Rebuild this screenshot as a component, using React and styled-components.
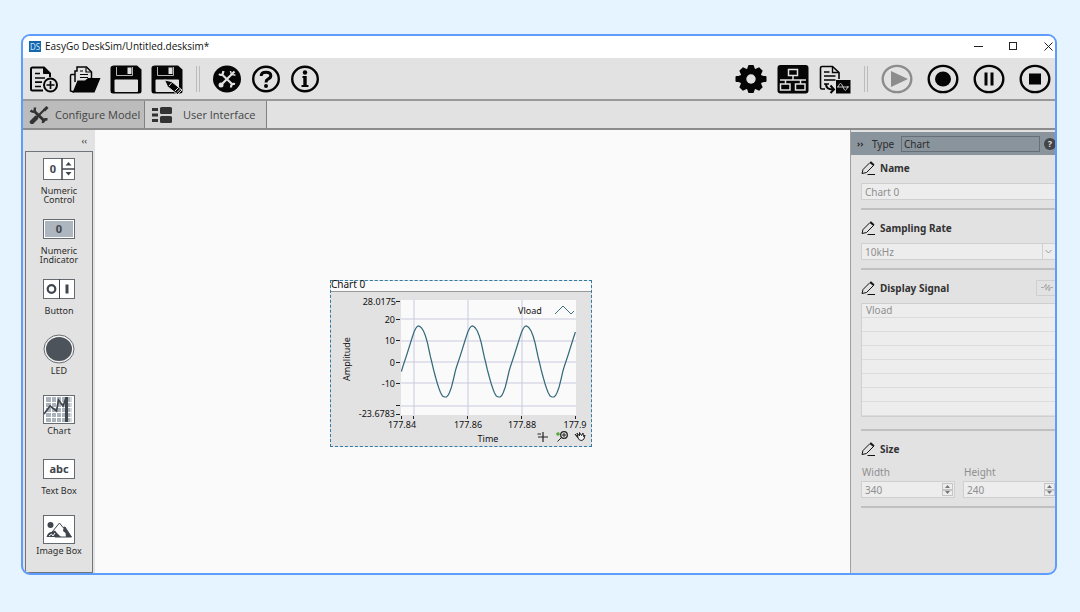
import { useState } from "react";
import styled, { createGlobalStyle } from "styled-components";

const ink = "#050505";
const paper = "#e2e2e2";

const PALETTE = [
  { label: "Numeric Control", icon: "control" },
  { label: "Numeric Indicator", icon: "indicator" },
  { label: "Button", icon: "button" },
  { label: "LED", icon: "led" },
  { label: "Chart", icon: "chart" },
  { label: "Text Box", icon: "text" },
  { label: "Image Box", icon: "image" },
];

const SIGNALS = ["Vload", "", "", "", "", "", "", ""];

const NewIcon = () => (
  <svg width="32" height="30" viewBox="0 0 32 30" fill="none" stroke={ink} strokeWidth="2">
    <path d="M15 26.500H4.500Q3 26.500 3 25V5Q3 3.500 4.500 3.500H16L22 9.500V13" />
    <path d="M15.500 4V9.500H21.500Z" fill={ink} strokeWidth="1" />
    <path d="M7 9.500H12M7 14H17M7 18.200H14M7 22.500H13" strokeWidth="1.700" />
    <circle cx="22.500" cy="21" r="6.500" />
    <path d="M18.500 21H26.500M22.500 17V25" strokeWidth="1.700" />
  </svg>
);

const OpenIcon = () => (
  <svg width="32" height="30" viewBox="0 0 32 30" fill="none" stroke={ink} strokeWidth="1.500">
    <path d="M6 10.500H2.500Q1.500 10.500 1.500 12V27L5 28" />
    <path d="M6 18V7H8V3H17.500L22.500 8V14" />
    <path d="M17 3.500V8H22M11 7H14M11 10.500H19M11 13.500H19" strokeWidth="1.200" />
    <path d="M3.500 28.500L8.500 16.500H16L19 14H31.500L25.500 28.500Z" fill={ink} stroke="none" />
  </svg>
);

const Floppy = () => (
  <>
    <path d="M4 1.500H27L31.500 5.500V27Q31.500 29.500 29 29.500H3Q0.500 29.500 0.500 27V4Q0.500 1.500 4 1.500Z" fill={ink} />
    <path d="M6.500 3V11.500H22.500V3" fill={ink} stroke={paper} strokeWidth="0.800" />
    <rect x="17.500" y="3.500" width="4" height="6.500" fill={paper} />
    <rect x="4.500" y="15.500" width="23.500" height="12.500" rx="1" fill={paper} />
  </>
);

const SaveIcon = () => (
  <svg width="32" height="30" viewBox="0 0 32 30">
    <Floppy />
  </svg>
);

const SaveAsIcon = () => (
  <svg width="32" height="30" viewBox="0 0 32 30">
    <Floppy />
    <path d="M13.500 16L20.500 17.500L31 26L26.500 30.500L16.500 22.500Z" fill={ink} stroke={paper} />
    <path d="M18 22L21 18.500M24 27L27.500 23.500M26 28.500L29.500 25" stroke={paper} />
  </svg>
);

const ToolsIcon = () => (
  <svg width="28" height="30" viewBox="0 0 28 30">
    <ellipse cx="14" cy="15" rx="14" ry="13.500" fill={ink} />
    <g stroke={paper} strokeWidth="2.200" fill="none">
      <path d="M9.500 11L19.500 20.500M21.500 7.500L8.500 20.500" />
      <path d="M6 10Q9.500 13 10.500 7M18 23.500Q18 19 22 20" />
      <path d="M17.500 7Q18 11.500 22.500 11" strokeWidth="1.500" />
    </g>
    <circle cx="8" cy="21" r="2.500" fill={paper} />
  </svg>
);

const HelpIcon = () => (
  <svg width="28" height="30" viewBox="0 0 28 30" fill="none" stroke={ink}>
    <ellipse cx="14" cy="15" rx="12.800" ry="12.300" strokeWidth="2.400" />
    <path d="M9.200 12Q9.200 8.300 14 8.300Q18.800 8.300 18.800 11.800Q18.800 13.800 16 15.200Q14 16.200 14 18.500" strokeWidth="3" />
    <circle cx="14" cy="22" r="2" fill={ink} stroke="none" />
  </svg>
);

const InfoIcon = () => (
  <svg width="28" height="30" viewBox="0 0 28 30" fill="none" stroke={ink}>
    <ellipse cx="14" cy="15" rx="12.800" ry="12.300" strokeWidth="2.400" />
    <circle cx="14" cy="8.500" r="2.200" fill={ink} stroke="none" />
    <path d="M11.500 13H14M10.500 22H17.500" strokeWidth="2" />
    <path d="M14 12V22" strokeWidth="3.400" />
  </svg>
);

const GearIcon = () => (
  <svg width="32" height="30" viewBox="0 0 32 30">
    <g fill={ink}>
      {[0, 45, 90, 135].map((a) => (
        <path key={a} d="M12 5L13.500 1H18.500L20 5V25L18.500 29H13.500L12 25Z" transform={`rotate(${a} 16 15)`} />
      ))}
      <rect x="0.500" y="12" width="31" height="6" rx="1" />
      <circle cx="16" cy="15" r="10.500" />
    </g>
    <circle cx="16" cy="15" r="4.700" fill={paper} />
  </svg>
);

const NetworkIcon = () => (
  <svg width="32" height="30" viewBox="0 0 32 30">
    <rect x="0.500" y="1" width="31" height="28.500" rx="3" fill={ink} />
    <g fill="none" stroke={paper} strokeWidth="1.500">
      <rect x="11.500" y="5.500" width="9" height="6" />
      <rect x="3.500" y="20" width="9.500" height="6" />
      <rect x="18.500" y="20" width="9.500" height="6" />
      <path d="M16 11.500V16M3 16H29M8.500 16V20M23.500 16V20" />
    </g>
  </svg>
);

const ReportIcon = () => (
  <svg width="32" height="30" viewBox="0 0 32 30" fill="none" stroke={ink}>
    <path d="M6 25H3Q1.500 25 1.500 23.500V4Q1.500 2.500 3 2.500H13.500L20 8.500V15" strokeWidth="1.600" />
    <path d="M13.500 3V8.500H19.500M5 8H10.500M5 12H16.500M5 16H16.500M5 20H10" strokeWidth="1.400" />
    <path d="M7 20Q7 25.500 14 25.500M11.500 21.500L15 25.500L11.500 29" strokeWidth="2" />
    <rect x="17" y="16" width="14.500" height="13.500" fill={ink} stroke="none" />
    <path d="M18 23H30M19 23Q21.500 16 24 23T29 22" stroke="#c8c8c8" />
  </svg>
);

const Ring = ({ color = ink, children }) => (
  <svg width="32" height="30" viewBox="0 0 32 30">
    <ellipse cx="16" cy="15" rx="14.300" ry="13.100" fill="none" stroke={color} strokeWidth="2.400" />
    <g fill={color}>{children}</g>
  </svg>
);

const ToolsTabIcon = () => (
  <svg width="20" height="18" viewBox="0 0 20 18" fill="none" stroke="#333">
    <path d="M5 5L16 15.500" strokeWidth="3" />
    <path d="M16 3L4 15" strokeWidth="2.200" />
    <path d="M1.500 4.500Q6 8 6 1.500M14 17Q13.500 12.500 18.500 13.500" strokeWidth="2.500" />
    <path d="M7 12L3 16" strokeWidth="4.500" strokeLinecap="round" />
    <path d="M15 4.500L18.500 1" strokeWidth="3" />
  </svg>
);

const ListTabIcon = () => (
  <svg width="22" height="16" viewBox="0 0 22 16" fill="#333">
    <path d="M1 1H7V4H1ZM1 6.500H7V9.500H1ZM1 12H7V15H1Z" />
    <rect x="9" y="0" width="12" height="7" rx="1.500" />
    <rect x="9" y="9" width="12" height="7" rx="1.500" />
  </svg>
);

const PencilIcon = () => (
  <svg width="14" height="14" viewBox="0 0 14 14" fill="none" stroke="#111">
    <path d="M1 12.500L2 8.500L9 1.500L12.500 4.500L5.500 11.500Z" />
    <path d="M9 1.500L10 0.800L13 3.500L12.500 4.500Z" fill="#111" />
    <path d="M6.500 13.500H14" />
  </svg>
);

const PaletteIcon = ({ kind }) => {
  const dark = "#40464d";
  const box = (y, h, fill = "#fff") => (
    <rect x="0.500" y={y + 0.5} width="31" height={h - 1} fill={fill} stroke="#666b70" />
  );
  return (
    <svg width="32" height="30" viewBox="0 0 32 30">
      {kind === "control" && (
        <>
          {box(4, 22)}
          <Glyph x="10" y="19">0</Glyph>
          <path d="M19 4V26M19 15H32" stroke={dark} strokeWidth="1.500" />
          <path d="M22.500 11.500L25.500 8L28.500 11.500ZM22.500 18L25.500 21.500L28.500 18Z" fill={dark} />
        </>
      )}
      {kind === "indicator" && (
        <>
          {box(5, 20)}
          <rect x="2" y="7" width="28" height="16" fill="#adb5be" />
          <Glyph x="16" y="19">0</Glyph>
        </>
      )}
      {kind === "button" && (
        <>
          {box(5, 20)}
          <path d="M16.500 5V25" stroke={dark} />
          <circle cx="8.500" cy="15" r="3.800" fill="none" stroke={dark} strokeWidth="2.200" />
          <path d="M24 10.500V19.500" stroke={dark} strokeWidth="3" />
        </>
      )}
      {kind === "led" && (
        <>
          <ellipse cx="16" cy="15" rx="15" ry="14" fill="#f4f4f4" stroke="#666b70" />
          <ellipse cx="16" cy="15" rx="13" ry="12" fill="#4c535a" />
        </>
      )}
      {kind === "chart" && (
        <>
          {box(1, 29)}
          <rect x="3" y="3" width="26" height="25" fill="#aab2bb" />
          <path d="M8.500 3V28M13.500 3V28M18.500 3V28M3 8.500H29M3 13.500H29M3 18.500H29M3 23.500H29M28 3V28" stroke="#fff" />
          <path d="M23.500 3V28" stroke={dark} strokeWidth="3" />
          <path d="M1 20L7 12L13.500 17L15.500 6L20 12L23 4" fill="none" stroke={dark} strokeWidth="1.700" />
        </>
      )}
      {kind === "text" && (
        <>
          {box(5, 20)}
          <Glyph x="16" y="19">abc</Glyph>
        </>
      )}
      {kind === "image" && (
        <>
          {box(1, 29)}
          <circle cx="7.500" cy="11" r="3" fill={dark} />
          <path d="M9 18L16.500 9L20 13.500L22 13L28.500 23H12Z" fill="#fff" stroke={dark} />
          <path d="M16.500 9L20.500 14L20 17L22.500 19L23 23H28.500L22 13L20 13.500Z" fill={dark} />
          <path d="M3.500 23Q5 18 8.500 18L12 16.500L14 19L18 23Z" fill={dark} />
          <path d="M6 22L8.500 20L10 22L12 19" fill="none" stroke="#fff" />
        </>
      )}
    </svg>
  );
};

// One cycle of the trace, starting at a crest
const PERIOD = 53.8;
const CYCLE = [
  [0, 26], [1.5, 26.5], [3, 28], [5, 31], [7, 36], [9, 43], [10.5, 50], [12, 57], [13.5, 63],
  [15, 69.5], [17, 77], [19, 84], [20.500, 88.500], [22, 92.500], [24, 96], [26, 97], [28, 97],
  [29.500, 95.500], [31, 92.500], [33, 87], [35, 79], [36.700, 71.500], [38, 67], [40, 61],
  [42, 55], [44.500, 47], [47, 39], [49.300, 32], [51, 28.500], [52.500, 26.500],
];

const trace = [-1, 0, 1, 2, 3]
  .flatMap((n) => CYCLE.map(([x, y]) => [x + 88.5 + n * PERIOD, y + 8]))
  .filter(([x]) => x >= 71 && x <= 246);

const ChartPlot = () => (
  <Plot width="260" height="154" viewBox="1 0 260 154" role="img" aria-label="Vload over time">
    <rect x="71" y="8" width="175" height="115" fill="#fafafa" />
    <path d="M84 8V123M138 8V123M192 8V123M71 27H246M71 49H246M71 70H246M71 91H246M71 114H246" stroke="#c9cade" />
    <path d="M66 9.500H70M66 27.500H70M66 48.500H70M66 70.500H70M66 91.500H70M66 113.500H70M66 122.500H70M71.500 124V127M83.500 124V127M137.500 124V127M191.500 124V127M245.500 124V127" stroke="#222" />
    <polyline points={trace.map((p) => p.join(",")).join(" ")} fill="none" stroke="#34697a" strokeWidth="1.200" />
    <g textAnchor="end">
      <text x="66" y="13">28.0175</text>
      <text x="65" y="31">20</text>
      <text x="65" y="52">10</text>
      <text x="65" y="74">0</text>
      <text x="65" y="95">-10</text>
      <text x="65" y="125">-23.6783</text>
    </g>
    <g textAnchor="middle">
      <text x="72" y="136">177.84</text>
      <text x="138" y="136">177.86</text>
      <text x="192" y="136">177.88</text>
      <text x="245" y="136">177.9</text>
      <text x="158" y="150">Time</text>
      <text transform="translate(20 67) rotate(-90)">Amplitude</text>
    </g>
    <text x="188" y="22">Vload</text>
    <path d="M225 22L233 14L241 22L244 19" fill="none" stroke="#3c6f80" />
    <path d="M208 145H218M213 140V150M207.500 142H211" stroke="#222" strokeWidth="1.200" />
    <circle cx="228" cy="142" r="1.800" fill="#56a83c" />
    <circle cx="234" cy="143" r="3.300" fill="none" stroke="#222" strokeWidth="1.300" />
    <path d="M232 143H236M234 141V145M231.500 145.500L227.500 149.500" stroke="#222" />
    <path d="M245 142L248 145.500L247 141L249.500 144L249.500 140.500L251.500 143.500L253 141L253.500 144.500L255 143L254 147Q252 149.500 249.500 148Z" fill="#f4f4f4" stroke="#222" />
  </Plot>
);

const Field = ({ id, label, value }) => {
  const [amount, setAmount] = useState(value);
  return (
    <SizeField>
      <label htmlFor={id}>{label}</label>
      <NumberBox>
        <input id={id} type="number" value={amount} onChange={(e) => setAmount(+e.target.value)} />
        <Spinner>
          <button aria-label={`Increase ${label}`} onClick={() => setAmount(amount + 1)}>
            <svg width="5" height="3" viewBox="0 0 5 3"><path d="M0 3L2.500 0L5 3Z" fill="#777" /></svg>
          </button>
          <button aria-label={`Decrease ${label}`} onClick={() => setAmount(amount - 1)}>
            <svg width="5" height="3" viewBox="0 0 5 3"><path d="M0 0L2.500 3L5 0Z" fill="#777" /></svg>
          </button>
        </Spinner>
      </NumberBox>
    </SizeField>
  );
};

export default function App() {
  const [name, setName] = useState("Chart 0");
  const [type, setType] = useState("Chart");
  return (
    <Page>
      <GlobalStyle />
      <Window>
        <TitleBar>
          <Logo>DS</Logo>
          <Title>EasyGo DeskSim/Untitled.desksim*</Title>
          <WindowButtons>
            <button aria-label="Minimize">
              <svg width="9" height="9" viewBox="0 0 9 9"><path d="M0 4.500H9" stroke="#222" /></svg>
            </button>
            <button aria-label="Maximize">
              <svg width="9" height="9" viewBox="0 0 9 9"><rect x="0.500" y="0.500" width="7" height="7" fill="none" stroke="#222" /></svg>
            </button>
            <button aria-label="Close">
              <svg width="9" height="9" viewBox="0 0 9 9"><path d="M0.500 0.500L8.500 8.500M8.500 0.500L0.500 8.500" stroke="#222" /></svg>
            </button>
          </WindowButtons>
        </TitleBar>

        <Toolbar>
          <Group $gap="9px">
            <IconButton aria-label="New"><NewIcon /></IconButton>
            <IconButton aria-label="Open"><OpenIcon /></IconButton>
            <IconButton aria-label="Save"><SaveIcon /></IconButton>
            <IconButton aria-label="Save as"><SaveAsIcon /></IconButton>
          </Group>
          <Separator />
          <Group $gap="11px">
            <IconButton aria-label="Tools"><ToolsIcon /></IconButton>
            <IconButton aria-label="Help"><HelpIcon /></IconButton>
            <IconButton aria-label="About"><InfoIcon /></IconButton>
          </Group>
          <Spacer />
          <Group $gap="10px">
            <IconButton aria-label="Settings"><GearIcon /></IconButton>
            <IconButton aria-label="Network"><NetworkIcon /></IconButton>
            <IconButton aria-label="Report"><ReportIcon /></IconButton>
          </Group>
          <Separator />
          <Group $gap="14px">
            <IconButton aria-label="Run"><Ring color="#8c8c8c"><path d="M10 7L27 15L10 23Z" /></Ring></IconButton>
            <IconButton aria-label="Record"><Ring><ellipse cx="16" cy="15" rx="8" ry="7.500" /></Ring></IconButton>
            <IconButton aria-label="Pause"><Ring><path d="M11.500 8.500H14.500V21.500H11.500ZM17.500 8.500H20.500V21.500H17.500Z" /></Ring></IconButton>
            <IconButton aria-label="Stop"><Ring><path d="M10 9.500H22V20.500H10Z" /></Ring></IconButton>
          </Group>
        </Toolbar>

        <Tabs>
          <Tab $bg="#bcbcbc"><ToolsTabIcon />Configure Model</Tab>
          <Tab $bg="#d2d2d2" $gap="10px"><ListTabIcon />User Interface</Tab>
        </Tabs>

        <Workspace>
          <Sidebar>
            <Collapse aria-label="Collapse palette">‹‹</Collapse>
            <Palette>
              {PALETTE.map((item) => (
                <PaletteItem key={item.label}>
                  <PaletteIcon kind={item.icon} />
                  <span>{item.label}</span>
                </PaletteItem>
              ))}
            </Palette>
          </Sidebar>

          <Canvas>
            <Widget>
              <WidgetTitle>{name}</WidgetTitle>
              <ChartPlot />
            </Widget>
          </Canvas>

          <Panel>
            <PanelHeader>
              <PanelToggle aria-label="Collapse panel">››</PanelToggle>
              <label htmlFor="type">Type</label>
              <TypeInput id="type" value={type} onChange={(e) => setType(e.target.value)} />
              <PanelHelp aria-label="Help">?</PanelHelp>
            </PanelHeader>
            <PanelBody>
              <Section>
                <SectionTitle><PencilIcon /><label htmlFor="name">Name</label></SectionTitle>
                <TextInput id="name" value={name} onChange={(e) => setName(e.target.value)} />
              </Section>
              <Section>
                <SectionTitle><PencilIcon /><label htmlFor="rate">Sampling Rate</label></SectionTitle>
                <SelectBox>
                  <select id="rate" defaultValue="10kHz">
                    <option>10kHz</option>
                    <option>1kHz</option>
                  </select>
                  <svg width="14" height="15" viewBox="0 0 14 15"><path d="M0.500 0V15" stroke="#cfcfcf" /><path d="M3.500 6L6.500 9L9.500 6" fill="none" stroke="#999" /></svg>
                </SelectBox>
              </Section>
              <Section $tail="12px">
                <SectionTitle>
                  <PencilIcon />
                  <h2>Display Signal</h2>
                  <SignalButton aria-label="Choose signals">
                    <svg width="12" height="10" viewBox="0 0 12 10"><path d="M0 5.500H3L5 2V8L8 3V9L9.500 5.500H12" fill="none" stroke="#aaa" /></svg>
                  </SignalButton>
                </SectionTitle>
                <SignalList>
                  {SIGNALS.map((signal, i) => (
                    <li key={i}>{signal}</li>
                  ))}
                </SignalList>
              </Section>
              <Section>
                <SectionTitle><PencilIcon /><h2>Size</h2></SectionTitle>
                <SizeRow>
                  <Field id="width" label="Width" value={340} />
                  <Field id="height" label="Height" value={240} />
                </SizeRow>
              </Section>
            </PanelBody>
          </Panel>
        </Workspace>
      </Window>
    </Page>
  );
}

const GlobalStyle = createGlobalStyle`
  * {
    box-sizing: border-box;
  }
  body {
    margin: 0;
    background: #e6f4ff;
  }
  body, button, input, select {
    font-family: "Noto Sans", "Open Sans", sans-serif;
    font-size: 9px;
    color: #2c2c2c;
  }
  button {
    padding: 0;
    border: none;
    background: none;
  }
  h2 {
    margin: 0;
    font-size: inherit;
  }
`;
const Page = styled.div`
  display: flex;
  min-height: 100vh;
  padding: 34px 23px 37px 21px;
`;
const Window = styled.main`
  flex: 1;
  min-width: 0;
  display: flex;
  flex-direction: column;
  border: 2px solid #5e9cff;
  border-radius: 9px;
  background: ${paper};
  overflow: hidden;
`;
const TitleBar = styled.header`
  display: flex;
  align-items: center;
  height: 22px;
  padding: 0 2px 2px 6px;
  background: #fff;
`;
const Logo = styled.span`
  width: 12px;
  height: 11px;
  margin-right: 4px;
  background: #1466ad;
  color: #cfe6fa;
  font-size: 8px;
  line-height: 11px;
  text-align: center;
`;
const Title = styled.span`
  font-family: "Open Sans", "Noto Sans", sans-serif;
  font-size: 10px;
  color: #111;
`;
const WindowButtons = styled.div`
  display: flex;
  gap: 26px;
  margin-left: auto;
  button {
    display: flex;
  }
`;
const Toolbar = styled.div`
  display: flex;
  align-items: center;
  height: 43px;
  padding: 0 4px 0 5px;
  border-bottom: 2px solid #999;
`;
const Group = styled.div`
  display: flex;
  gap: ${(props) => props.$gap};
`;
const IconButton = styled.button`
  display: flex;
`;
const Separator = styled.span`
  width: 4px;
  height: 26px;
  margin: 0 13px;
  border: solid #bbb;
  border-width: 0 1px;
`;
const Spacer = styled.span`
  flex: 1;
`;
const Tabs = styled.nav`
  display: flex;
  height: 29px;
  border-bottom: 2px solid #8c8c8c;
`;
const Tab = styled.button`
  display: flex;
  align-items: center;
  gap: ${(props) => props.$gap || "6px"};
  width: 122px;
  padding-left: 6px;
  border-right: 1px solid #808080;
  background: ${(props) => props.$bg};
  font-family: "Open Sans", "Noto Sans", sans-serif;
  font-size: 11px;
  color: #444;
  white-space: nowrap;
`;
const Workspace = styled.div`
  flex: 1;
  display: flex;
`;
const Sidebar = styled.aside`
  display: flex;
  flex-direction: column;
  width: 72px;
  padding-left: 2px;
`;
const Collapse = styled.button`
  height: 21px;
  padding-right: 8px;
  text-align: right;
`;
const Palette = styled.div`
  flex: 1;
  display: flex;
  flex-direction: column;
  gap: 8px;
  width: 68px;
  padding-top: 2px;
  border: 1px solid #70757c;
`;
const PaletteItem = styled.button`
  display: flex;
  flex-direction: column;
  align-items: center;
  gap: 2px;
  height: 52px;
  line-height: 9px;
  span {
    max-width: 50px;
  }
`;
const Glyph = styled.text`
  font-size: 11px;
  font-weight: 700;
  fill: #40464d;
  text-anchor: middle;
`;
const Canvas = styled.section`
  position: relative;
  flex: 1;
  background: #fafafa;
`;
const Widget = styled.div`
  position: absolute;
  left: 235px;
  top: 150px;
  border: 1px dashed #2f7ba3;
  background: ${paper};
`;
const WidgetTitle = styled.div`
  height: 11px;
  font-size: 10px;
  line-height: 7px;
  border-bottom: 1px solid #999;
  background: #fafafa;
  color: #111;
`;
const Plot = styled.svg`
  display: block;
  fill: #111;
`;
const Panel = styled.aside`
  width: 205px;
  border-left: 1px solid #a0a0a0;
  overflow: hidden;
  font-size: 10px;
  input, select {
    font-size: 10px;
  }
`;
const PanelHeader = styled.div`
  display: flex;
  align-items: center;
  height: 23px;
  margin-top: 2px;
  padding-left: 6px;
  background: #8a949c;
  label {
    width: 29px;
  }
`;
const PanelToggle = styled.button`
  width: 15px;
  text-align: left;
  font-weight: 700;
`;
const TypeInput = styled.input`
  flex: 1;
  min-width: 0;
  height: 16px;
  padding: 0 2px;
  border: 1px solid #666f77;
  background: none;
`;
const PanelHelp = styled.button`
  width: 12px;
  height: 12px;
  margin: 0 -1px 0 4px;
  border-radius: 50%;
  background: #444;
  color: #ddd;
  font-weight: 700;
  line-height: 12px;
`;
const PanelBody = styled.div`
  margin-right: -2px;
  padding-left: 10px;
`;
const Section = styled.section`
  padding-bottom: ${(props) => props.$tail || "8px"};
  border-bottom: 2px solid #c0c0c0;
  & + & {
    padding-top: 5px;
  }
`;
const SectionTitle = styled.div`
  display: flex;
  align-items: center;
  gap: 5px;
  height: 26px;
  margin-bottom: 2px;
  font-weight: 700;
  color: #333;
`;
const TextInput = styled.input`
  display: block;
  width: 100%;
  height: 17px;
  padding: 0 3px;
  border: 1px solid #cfcfcf;
  background: #ededed;
  color: #8f8f8f;
`;
const SelectBox = styled.div`
  display: flex;
  height: 17px;
  border: 1px solid #cfcfcf;
  background: #ededed;
  select {
    flex: 1;
    padding: 0 3px;
    border: none;
    appearance: none;
    background: none;
    color: #8f8f8f;
  }
`;
const SignalButton = styled.button`
  width: 21px;
  height: 16px;
  margin-left: auto;
  border: 1px solid #cfcfcf;
`;
const SignalList = styled.ul`
  margin: 0;
  padding: 0;
  border: 1px solid #cfcfcf;
  list-style: none;
  background: #ededed;
  color: #8f8f8f;
  li {
    height: 14px;
    padding-left: 4px;
    border-bottom: 1px solid #dcdcdc;
    line-height: 13px;
  }
`;
const SizeRow = styled.div`
  display: flex;
  gap: 8px;
`;
const SizeField = styled.div`
  flex: 1;
  min-width: 0;
  color: #8f8f8f;
  label {
    display: block;
    padding-left: 1px;
    line-height: 17px;
  }
`;
const NumberBox = styled.div`
  display: flex;
  height: 17px;
  border: 1px solid #cfcfcf;
  background: #ededed;
  input {
    flex: 1;
    min-width: 0;
    padding: 0 3px;
    border: none;
    background: none;
    color: #8f8f8f;
    appearance: textfield;
  }
`;
const Spinner = styled.div`
  display: flex;
  flex-direction: column;
  width: 11px;
  margin: 1px;
  button {
    flex: 1;
    display: flex;
    align-items: center;
    justify-content: center;
    border: 1px solid #c4c4c4;
  }
`;
